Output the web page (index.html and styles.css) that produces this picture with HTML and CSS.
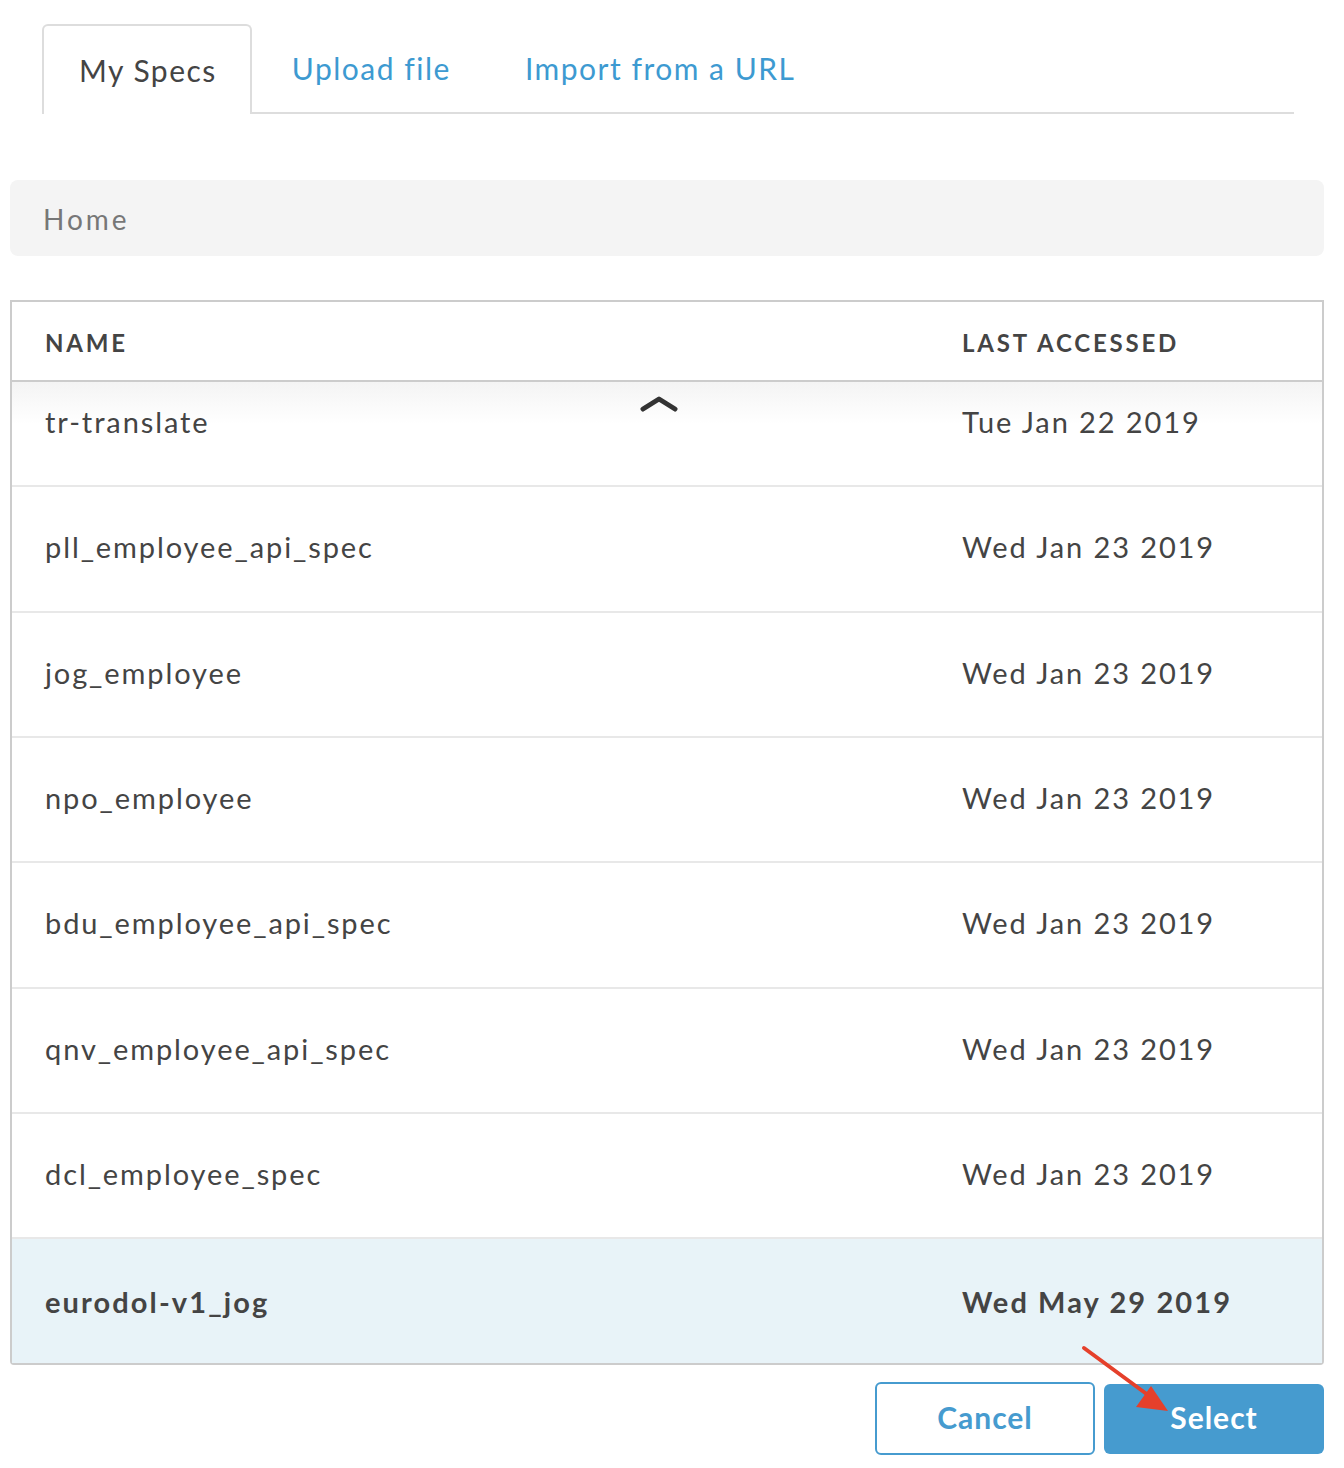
FILE: index.html
```html
<!DOCTYPE html>
<html>
<head>
<meta charset="utf-8">
<link rel="stylesheet" href="styles.css">
</head>
<body>
<div class="page">
  <div class="tabs">
    <div class="tab active">My Specs</div>
    <div class="tab">Upload file</div>
    <div class="tab">Import from a URL</div>
  </div>
  <div class="crumb">Home</div>
  <div class="table">
    <div class="thead">
      <div class="c-name">NAME</div>
      <div class="c-date">LAST ACCESSED</div>
    </div>
    <div class="tbody">
      <div class="rows">
        <div class="row first"><div class="c-name">tr-translate</div><div class="c-date">Tue Jan 22 2019</div></div>
        <div class="row"><div class="c-name">pll_employee_api_spec</div><div class="c-date">Wed Jan 23 2019</div></div>
        <div class="row"><div class="c-name">jog_employee</div><div class="c-date">Wed Jan 23 2019</div></div>
        <div class="row"><div class="c-name">npo_employee</div><div class="c-date">Wed Jan 23 2019</div></div>
        <div class="row"><div class="c-name">bdu_employee_api_spec</div><div class="c-date">Wed Jan 23 2019</div></div>
        <div class="row"><div class="c-name">qnv_employee_api_spec</div><div class="c-date">Wed Jan 23 2019</div></div>
        <div class="row"><div class="c-name">dcl_employee_spec</div><div class="c-date">Wed Jan 23 2019</div></div>
        <div class="row selected"><div class="c-name">eurodol-v1_jog</div><div class="c-date">Wed May 29 2019</div></div>
      </div>
      <svg class="chevron" width="40" height="18" viewBox="0 0 40 18"><polyline points="3,14 19,4 35,14" fill="none" stroke="#333" stroke-width="5" stroke-linecap="round" stroke-linejoin="round"/></svg>
    </div>
  </div>
  <div class="actions">
    <button class="btn cancel">Cancel</button>
    <button class="btn select">Select</button>
    <svg class="arrow" width="100" height="80" viewBox="0 0 100 80"><line x1="4" y1="3" x2="68" y2="50" stroke="#e5402b" stroke-width="4" stroke-linecap="round"/><polygon points="88,66 56,62 71,41" fill="#e5402b"/></svg>
  </div>
</div>
</body>
</html>
```
FILE: styles.css
```css
* { box-sizing: border-box; }
html, body { margin: 0; padding: 0; background: #fff; }
body { font-family: Lato, "Open Sans", sans-serif; color: #444; }
.page { width: 1344px; padding: 24px 20px 0 10px; position: relative; }

.tabs { display: flex; margin: 0 30px 0 32px; border-bottom: 2px solid #ddd; height: 90px; }
.tab { font-size: 30px; color: #3d9ad1; line-height: 88px; letter-spacing: 1.5px; }
.tab.active { color: #444; border: 2px solid #ddd; border-bottom: none; border-radius: 6px 6px 0 0; background: #fff; margin-bottom: -2px; height: 90px; padding: 0 33px 0 35px; }
.tab:nth-child(2) { padding-left: 40px; }
.tab:nth-child(3) { padding-left: 74px; }

.crumb { margin-top: 66px; height: 76px; background: #f4f4f4; border-radius: 8px; font-size: 28px; color: #777; padding-left: 33px; line-height: 78px; letter-spacing: 3px; }

.table { margin-top: 44px; border: 2px solid #ccc; border-radius: 0 0 4px 4px; }
.thead { display: flex; height: 80px; align-items: center; padding-top: 2px; border-bottom: 2px solid #ccc; font-weight: 700; font-size: 24px; letter-spacing: 2.8px; color: #444; }
.c-name { padding-left: 33px; flex: 1; }
.c-date { width: 360px; }
.tbody { position: relative; height: 981px; overflow: hidden; }
.rows { margin-top: -20px; }
.row { display: flex; align-items: center; height: 125.33px; padding-bottom: 4px; border-bottom: 2px solid #e8e8e8; font-size: 29px; letter-spacing: 1.9px; color: #444; }
.row.first { background: linear-gradient(#f4f4f4 0px, #f4f4f4 20px, #fff 62px); }
.row.selected { background: #e8f3f8; font-weight: 700; border-bottom: none; height: 128px; letter-spacing: 2.1px; }
.chevron { position: absolute; left: 628px; top: 13px; }

.actions { display: flex; justify-content: flex-end; align-items: center; gap: 9px; margin-top: 17px; position: relative; }
.btn { font-family: Lato, sans-serif; font-weight: 700; font-size: 30px; width: 220px; height: 73px; border-radius: 6px; letter-spacing: 1px; margin: 0; padding: 0 0 4px; }
.cancel { background: #fff; color: #469bcf; border: 2px solid #469bcf; }
.select { background: #469bcf; color: #fff; border: none; height: 70px; }
.arrow { position: absolute; left: 1070px; top: -37px; }
```
